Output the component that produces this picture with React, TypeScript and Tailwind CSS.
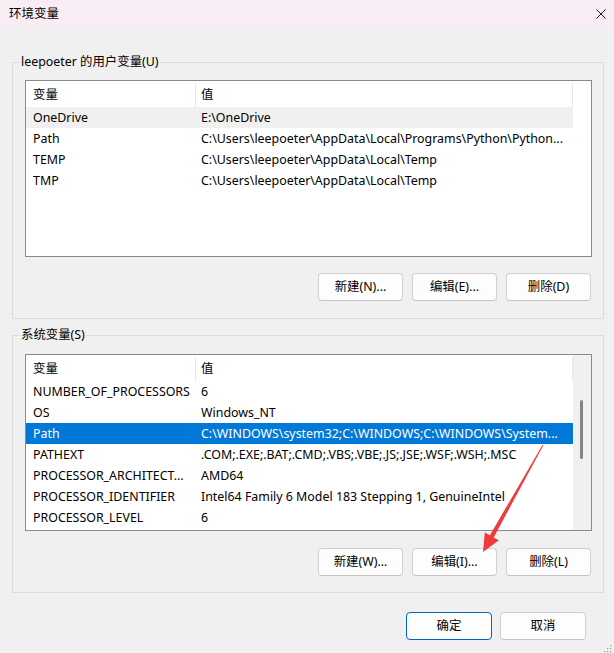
import React from "react";

const font = "font-[family-name:'Noto_Sans','Noto_Sans_CJK_SC',sans-serif]";

const userVars: [string, string][] = [
  ["OneDrive", "E:\\OneDrive"],
  ["Path", "C:\\Users\\leepoeter\\AppData\\Local\\Programs\\Python\\Python..."],
  ["TEMP", "C:\\Users\\leepoeter\\AppData\\Local\\Temp"],
  ["TMP", "C:\\Users\\leepoeter\\AppData\\Local\\Temp"],
];

const systemVars: [string, string][] = [
  ["NUMBER_OF_PROCESSORS", "6"],
  ["OS", "Windows_NT"],
  ["Path", "C:\\WINDOWS\\system32;C:\\WINDOWS;C:\\WINDOWS\\System..."],
  ["PATHEXT", ".COM;.EXE;.BAT;.CMD;.VBS;.VBE;.JS;.JSE;.WSF;.WSH;.MSC"],
  ["PROCESSOR_ARCHITECT...", "AMD64"],
  ["PROCESSOR_IDENTIFIER", "Intel64 Family 6 Model 183 Stepping 1, GenuineIntel"],
  ["PROCESSOR_LEVEL", "6"],
];

function VarList({ rows, selected, hovered, scrollbar }: { rows: [string, string][]; selected?: number; hovered?: number; scrollbar?: boolean }) {
  return (
    <div className="ml-[12px] mr-[11px] h-[177px] border border-[#868a91] bg-white flex overflow-hidden text-[12.4px]">
      <div className="w-[547px] flex flex-col">
        {/* column header */}
        <div className="h-[26px] flex shrink-0">
          <div className="w-[169px] pl-[7px] pt-[2px] flex items-center">变量</div>
          <span className="w-px mt-[2px] bg-[#e5e5e5]" />
          <div className="flex-1 pl-[5px] pt-[2px] flex items-center">值</div>
          <span className="w-px mt-[2px] bg-[#e5e5e5]" />
        </div>
        {rows.map(([name, value], i) => {
          const isSel = i === selected;
          const isHover = i === hovered;
          return (
            <div key={name + i} className={`h-[21px] pt-[1px] flex items-center shrink-0 whitespace-nowrap ${isSel ? "bg-[#0078d7] text-white" : isHover ? "bg-[#f0f0f0]" : ""}`}>
              <div className="w-[170px] pl-[7px] overflow-hidden">{name}</div>
              <div className="flex-1 pl-[5px] overflow-hidden">{value}</div>
            </div>
          );
        })}
      </div>
      <div className={`w-[18px] ${scrollbar ? "bg-[#f0f0f0]" : "bg-white"}`}>
        {scrollbar && <div className="mt-[45px] ml-[7px] w-[3px] h-[59px] rounded-full bg-[#858585]" />}
      </div>
    </div>
  );
}

function Btn({ label, primary, wide }: { label: string; primary?: boolean; wide?: boolean }) {
  return (
    <button className={`${wide ? "w-[86px]" : "w-[85px]"} h-[28px] rounded-[4px] border bg-[#fdfdfd] text-[12.4px] text-black ${primary ? "border-[#0067c0]" : "border-[#d0d0d0] border-b-[#c4c4c4]"}`}>
      {label}
    </button>
  );
}

export default function App() {
  return (
    <div className={`relative w-[614px] h-[653px] bg-[#f0f0f0] overflow-hidden text-[12.4px] text-black ${font}`}>
      {/* title bar */}
      <div className="h-[28px] bg-[#f9edf5] flex items-center justify-between pl-[9px]">
        <span className="text-[12.5px]">环境变量</span>
        <svg width="10" height="10" viewBox="0 0 10 10" className="mr-[8px] -mt-[1px]">
          <path d="M0.5 0.5 L9.5 9.5 M9.5 0.5 L0.5 9.5" stroke="#1a1a1a" strokeWidth="1" />
        </svg>
      </div>

      {/* user variables */}
      <fieldset className="ml-[12px] mt-[26px] w-[592px] border border-[#dcdcdc] pb-[17px]">
        <legend className="ml-[7px] px-[1px] leading-[16px]">leepoeter 的用户变量(U)</legend>
        <div className="mt-[10px]">
          <VarList rows={userVars} hovered={0} />
        </div>
        <div className="mt-[16px] mr-[12px] flex justify-end gap-[9px]">
          <Btn label="新建(N)..." />
          <Btn label="编辑(E)..." />
          <Btn label="删除(D)" />
        </div>
      </fieldset>

      {/* system variables */}
      <fieldset className="ml-[12px] mt-[8px] w-[592px] border border-[#dcdcdc] pb-[16px]">
        <legend className="ml-[7px] px-[1px] leading-[16px]">系统变量(S)</legend>
        <div className="mt-[11px]">
          <VarList rows={systemVars} selected={2} scrollbar />
        </div>
        <div className="mt-[17px] mr-[12px] flex justify-end gap-[9px]">
          <Btn label="新建(W)..." />
          <Btn label="编辑(I)..." />
          <Btn label="删除(L)" />
        </div>
      </fieldset>

      {/* dialog buttons */}
      <div className="mt-[19px] mr-[28px] flex justify-end gap-[8px]">
        <Btn label="确定" primary wide />
        <Btn label="取消" wide />
      </div>

      {/* size grip */}
      <div className="mt-[4px] mr-[2px] flex justify-end">
        <svg width="9" height="9" viewBox="0 0 9 9">
          {[
            [7, 1],
            [4, 4],
            [7, 4],
            [1, 7],
            [4, 7],
            [7, 7],
          ].map(([x, y]) => (
            <rect key={`${x}-${y}`} x={x} y={y} width="1.2" height="1.2" fill="#9a9a9a" />
          ))}
        </svg>
      </div>

      {/* red annotation arrow */}
      <svg className="absolute inset-0 pointer-events-none" width="614" height="653" viewBox="0 0 614 653">
        <polygon points="543.4,445.2 493.7,537.4 498.8,540.2 483,552 484.8,532.4 489.9,535.2 542.6,444.8" fill="#f23a3a" />
      </svg>
    </div>
  );
}
